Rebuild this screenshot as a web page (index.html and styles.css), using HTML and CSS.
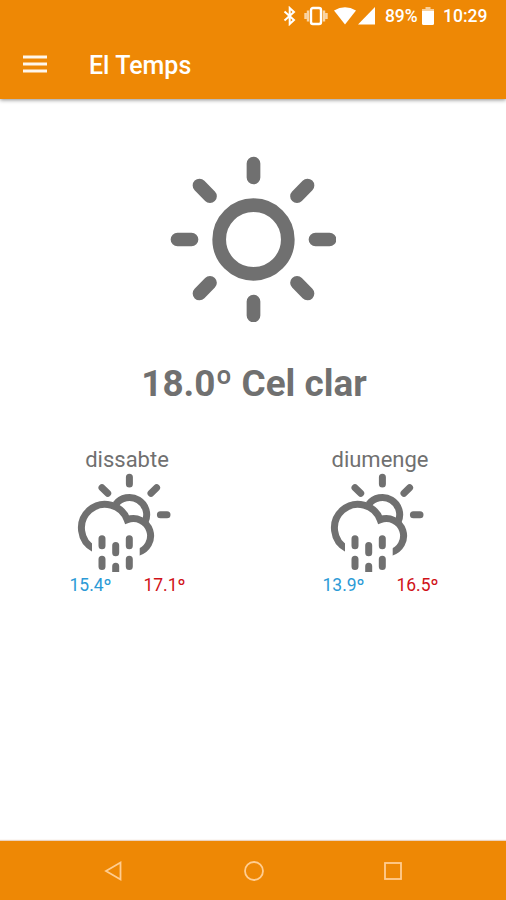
FILE: index.html
```html
<!DOCTYPE html>
<html lang="ca">
<head>
<meta charset="utf-8">
<title>El Temps</title>
<link rel="stylesheet" href="styles.css">
</head>
<body>
<svg class="defs" aria-hidden="true">
  <symbol id="showers" viewBox="76.8 472 100 100">
    <clipPath id="cloud-cut"><path d="M70 465H180V560H139.5V540H91.8V560H70Z"/></clipPath>
    <g fill="none" stroke="currentColor" stroke-width="7">
      <g stroke-linecap="round">
        <path d="M129.2 477.2V484M101.8 487.8L107.5 493.3M156.4 487.8L150.8 493.3M160.2 514.7H166.8"/>
        <path d="M101.8 538.8V545.8M115.5 545.5V552.7M129.1 538.8V545.8M101.8 559.3V566.5M129.1 559.3V566.5M115.5 566.2V580"/>
      </g>
      <g clip-path="url(#cloud-cut)">
        <path d="M115.5 504.3A17.2 17.2 0 0 1 144.8 522"/>
        <path d="M94 548.9A23.6 23.6 0 1 1 127 519.8A17.2 17.2 0 1 1 137.5 552.5"/>
      </g>
    </g>
  </symbol>
</svg>
<div class="screen">
  <header class="top">
    <div class="status">
      <svg class="bluetooth" width="14" height="20" viewBox="0 0 14 20"><path d="M1.5 5.5L11 14L6.7 18V2L11 6L1.5 14.5" fill="none" stroke="#fff" stroke-width="2"/></svg>
      <svg class="vibrate" width="24" height="20" viewBox="0 0 24 20"><rect x="7" y="2" width="10" height="16" rx="2" fill="none" stroke="#fff" stroke-width="2.4"/><path d="M4 4.5V15.5M20 4.5V15.5M1.5 7V13M22.5 7V13" fill="none" stroke="#fff" stroke-opacity=".65" stroke-width="2.4"/></svg>
      <svg class="wifi" width="22" height="18" viewBox="0 0 22 18"><path d="M0 3.5Q11 -3 22 3.5L11 17.5Z" fill="#fff"/></svg>
      <svg class="signal" width="17" height="18" viewBox="0 0 17 18"><path d="M0 17.5H17V0Z" fill="#fff"/></svg>
      <span class="percent">89%</span>
      <svg class="battery" width="12" height="18" viewBox="0 0 12 18"><path d="M0 2H3.5V0H8.5V2H12V4H0Z" fill="#fff" fill-opacity=".6"/><path d="M0 4H12V16.5Q12 18 10.5 18H1.5Q0 18 0 16.5Z" fill="#fff"/></svg>
      <span class="clock">10:29</span>
    </div>
    <div class="toolbar">
      <svg class="menu" width="24" height="18" viewBox="0 0 24 18"><path d="M0 2H24M0 9H24M0 16H24" stroke="#fff" stroke-width="2.8" stroke-opacity=".92"/></svg>
      <h1>El Temps</h1>
    </div>
  </header>
  <main>
    <svg class="sun" width="166" height="166" viewBox="-83.5 -83.5 166 166">
      <g fill="none" stroke="currentColor" stroke-width="13.7" stroke-linecap="round">
        <circle r="34.3"/>
        <path d="M0 -76V-62M0 76V62M-76 0H-62M76 0H62M-54 -54L-43.5 -43.3M54 -54L43.5 -43.3M-54 54L-43.5 43.3M54 54L43.5 43.3"/>
      </g>
    </svg>
    <p class="now">18.0º Cel clar</p>
    <div class="days">
      <section class="day">
        <h2>dissabte</h2>
        <svg class="icon" width="100" height="100"><use href="#showers"/></svg>
        <div class="range"><span class="low">15.4º</span><span class="high">17.1º</span></div>
      </section>
      <section class="day">
        <h2>diumenge</h2>
        <svg class="icon" width="100" height="100"><use href="#showers"/></svg>
        <div class="range"><span class="low">13.9º</span><span class="high">16.5º</span></div>
      </section>
    </div>
  </main>
  <nav>
    <svg width="20" height="22" viewBox="0 0 20 22"><path d="M2 11L16.5 2.5V19.5Z"/></svg>
    <svg width="20" height="22" viewBox="0 0 20 22"><circle cx="10" cy="11" r="9"/></svg>
    <svg width="20" height="22" viewBox="0 0 20 22"><rect x="2" y="3" width="16" height="16"/></svg>
  </nav>
</div>
</body>
</html>
```

FILE: styles.css
```css
* { box-sizing: border-box; }
body { margin: 0; background: #fff; font-family: Roboto, "Liberation Sans", sans-serif; color: #707070; }
h1, h2, p { margin: 0; font-weight: 400; white-space: nowrap; }
svg { display: block; flex: none; }
.defs { position: absolute; width: 0; height: 0; }
.screen { display: flex; flex-direction: column; height: 900px; overflow: hidden; }
.top { height: 99px; flex: none; background: #ee8805; color: #fff; box-shadow: 0 1px 4px rgba(0, 0, 0, .45); }
.status { display: flex; justify-content: flex-end; align-items: center; height: 32px; padding-right: 19px; font-size: 17.5px; font-weight: 500; line-height: 32px; }
.bluetooth { margin-right: 7px; }
.vibrate { margin-right: 6px; }
.wifi { margin-right: 2px; }
.signal { margin-right: 10px; }
.percent { width: 33px; margin-right: 4px; letter-spacing: -.1px; }
.battery { margin-right: 9px; }
.clock { width: 44px; }
.toolbar { display: flex; align-items: center; height: 67px; padding-left: 23px; }
.menu { margin-right: 42px; margin-bottom: 3px; }
.toolbar h1 { font-size: 25px; font-weight: 500; line-height: 32px; }
main { flex: 1; display: flex; flex-direction: column; align-items: center; }
.sun { margin-top: 57px; }
.now { margin-top: 40px; margin-left: 2px; height: 44px; line-height: 44px; font-size: 36.9px; font-weight: 700; }
.days { display: grid; grid-template-columns: 1fr 1fr; width: 100%; margin-top: 40px; }
.day { display: flex; flex-direction: column; align-items: center; }
.day h2 { height: 26px; line-height: 28px; font-size: 22px; padding-left: 1px; }
.range { display: flex; justify-content: space-between; width: 116px; margin-left: 2px; height: 26px; line-height: 26px; font-size: 17.5px; }
.low { color: #2b9ad6; }
.high { color: #d01118; }
nav { display: flex; justify-content: space-between; align-items: center; flex: none; height: 59px; padding: 1px 103px 0 104px; background: #ee8805; box-shadow: 0 -1px 1px rgba(190, 110, 50, .3); }
nav svg { fill: none; stroke: #ffcd91; stroke-width: 1.8; }
```
